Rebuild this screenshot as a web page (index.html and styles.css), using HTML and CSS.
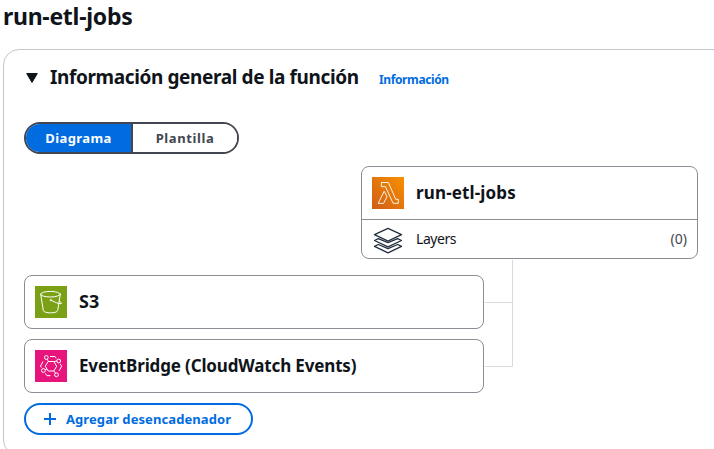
FILE: index.html
```
<!DOCTYPE html>
<html lang="es">
<head>
<meta charset="utf-8">
<title>run-etl-jobs</title>
<link rel="stylesheet" href="styles.css">
</head>
<body>
<h1 class="page-title"><span>run-etl-jobs</span></h1>
<section class="panel">
  <header class="panel-header">
    <svg class="caret" width="12" height="10" viewBox="0 0 12 10"><path d="M0.7 0.5h10.6L6 9.4z" fill="#0f141a" stroke="#0f141a" stroke-linejoin="round"/></svg>
    <h2 class="panel-title"><span>Información general de la función</span></h2>
    <a class="info"><span>Información</span></a>
  </header>
  <div class="toggle">
    <button class="segment segment-on"><span>Diagrama</span></button>
    <button class="segment segment-off"><span>Plantilla</span></button>
  </div>
  <div class="diagram">
    <article class="card function">
      <div class="row">
        <svg class="icon" width="32" height="32" viewBox="0 0 32 32">
          <defs><linearGradient id="orange" x1="0" y1="1" x2="1" y2="0"><stop offset="0" stop-color="#d05c17"/><stop offset="1" stop-color="#f79100"/></linearGradient></defs>
          <path fill="url(#orange)" d="M0 0h32v32H0z"/>
          <path fill="none" stroke="#fff" stroke-width=".9" stroke-linejoin="round" d="M9.400 5.500h7l7.300 16.800h2.600v4h-5.200L13.400 9.600h-4zM12.200 14.200l2.800 5.600-3.500 6.600H6.200z"/>
        </svg>
        <strong class="name name-fn"><span>run-etl-jobs</span></strong>
      </div>
      <div class="row layers">
        <svg class="icon" width="32" height="30" viewBox="0 0 32 30">
          <g fill="#fff" stroke="#232f3e" stroke-width="1.300" stroke-linejoin="round">
            <path d="M6.300 20.500 2.500 22.400 16 28.800l13.500-6.400-3.800-1.900L16 24.700z"/>
            <path d="M6.300 14.600 2.500 16.500 16 22.800l13.500-6.300-3.800-1.900L16 18.700z"/>
            <path d="M16 4.400 29.500 10.700 16 17.100 2.500 10.700z"/>
          </g>
        </svg>
        <span class="layers-label">Layers</span>
        <span class="count">(0)</span>
      </div>
    </article>
    <div class="triggers">
      <article class="card trigger">
        <svg class="icon" width="32" height="32" viewBox="0 0 32 32">
          <path fill="#7aa116" d="M0 0h32v32H0z"/>
          <g fill="none" stroke="#fff" stroke-width="1" stroke-linecap="round" stroke-linejoin="round">
            <ellipse cx="15.500" cy="8.200" rx="9.800" ry="2.800"/>
            <path d="M5.700 8.200 8.300 24.500c.7 3.200 13.700 3.200 14.400 0L25.300 8.200"/>
            <circle cx="15.800" cy="14.200" r=".7"/>
            <path d="M16.500 14.500c4 2 7.200 3.400 9.500 3.200 1.700-.3-.5-1.700-1.800-2.300"/>
          </g>
        </svg>
        <strong class="name name-s3"><span>S3</span></strong>
      </article>
      <article class="card trigger">
        <svg class="icon" width="32" height="32" viewBox="0 0 32 32">
          <path fill="#e7157b" d="M0 0h32v32H0z"/>
          <g fill="none" stroke="#fff" stroke-width="1" stroke-linejoin="round">
            <path d="M13.200 11.500h5.600l2.900 4.700-2.900 4.800h-5.600l-2.900-4.800z"/>
            <circle cx="11.300" cy="7.500" r="1.900"/><circle cx="23.700" cy="11" r="1.900"/>
            <circle cx="8.400" cy="20.500" r="1.900"/><circle cx="21.500" cy="24.800" r="1.900"/>
            <path d="m12.200 9.200 1.200 2.300M18.800 11.500l3-.4M10.100 19.800l1.800-.8M18.800 21l1.700 2.200M15 6.500h5l1.200 1.800M25.300 14l1.300 2.300-2.500 4.500M15.500 25.700H12l-1.700-2.300M6.300 17.500l-.8-1.500 2.500-4.500"/>
          </g>
        </svg>
        <strong class="name name-eb"><span>EventBridge (CloudWatch Events)</span></strong>
      </article>
    </div>
    <svg class="wires" width="28" height="107" viewBox="0 0 28 107"><path d="M27.500 0v106.500H0M0 42.500h27.500" fill="none" stroke="#dadade"/></svg>
  </div>
  <button class="add">
    <svg width="12" height="12" viewBox="0 0 12 12"><path d="M6 0v12M0 6h12" stroke="#006ce0" stroke-width="2"/></svg>
    <span>Agregar desencadenador</span>
  </button>
</section>
</body>
</html>
```
FILE: styles.css
```
* { box-sizing: border-box; }
body {
  margin: 0;
  overflow: hidden;
  background: #fff;
  color: #0f141a;
  font-family: "Noto Sans", "Open Sans", sans-serif;
  font-size: 14px;
}
h1, h2 { margin: 0; }
svg { display: block; flex: none; }
span { white-space: nowrap; }
button { font: inherit; padding: 0; margin: 0; }
.page-title {
  height: 49px;
  padding-left: 3px;
  font-size: 23px;
  line-height: 33px;
  letter-spacing: -0.28px;
}
.panel {
  width: 740px;
  height: 407px;
  margin-left: 3px;
  padding: 0 20px;
  border: 1px solid #c6c6cd;
  border-radius: 16px;
}
.panel-header {
  display: flex;
  align-items: center;
  height: 54px;
  padding-left: 2px;
}
.caret { margin-top: 2px; }
.panel-title {
  width: 329px;
  margin-left: 12px;
  font-size: 19px;
  line-height: 24px;
  letter-spacing: -0.38px;
}
.info { padding-top: 5px; color: #006ce0; font-size: 12px; font-weight: 700; letter-spacing: -0.38px; }
.toggle {
  display: flex;
  width: 215px;
  height: 32px;
  margin-top: 18px;
  border: 2px solid #424650;
  border-radius: 16px;
  overflow: hidden;
}
.segment { border: 0; background: #fff; color: #424650; font-weight: 700; font-size: 13px; letter-spacing: 0.4px; }
.segment-on { width: 107px; border-right: 2px solid #424650; background: #006ce0; color: #fff; }
.segment-off { flex: 1; letter-spacing: 0.6px; }
.diagram { position: relative; padding-top: 12px; }
.card { border: 1px solid #8c8c94; border-radius: 8px; background: #fff; }
.function { width: 337px; height: 93px; margin-left: 337px; }
.row, .trigger { display: flex; align-items: center; height: 52px; padding: 0 10px; }
.layers { height: 39px; border-top: 1px solid #8c8c94; }
.name { margin-left: 12px; padding-bottom: 1px; font-size: 17px; line-height: 24px; }
.name-fn { letter-spacing: 0.15px; }
.name-s3 { padding-bottom: 2px; font-size: 18px; }
.name-eb { letter-spacing: -0.15px; }
.layers-label { margin-left: 12px; padding-bottom: 2px; letter-spacing: -0.45px; }
.count { margin-left: auto; padding-bottom: 2px; color: #424650; }
.triggers { display: grid; gap: 10px; width: 460px; margin-top: 16px; }
.trigger { height: 54px; }
.wires { position: absolute; left: 461px; top: 106px; }
.add {
  display: flex;
  align-items: center;
  width: 229px;
  height: 32px;
  margin-top: 10px;
  padding-left: 18px;
  gap: 10px;
  border: 2px solid #006ce0;
  border-radius: 16px;
  background: #fff;
  color: #006ce0;
  font-size: 13px;
  font-weight: 700;
  letter-spacing: 0.08px;
}
```
